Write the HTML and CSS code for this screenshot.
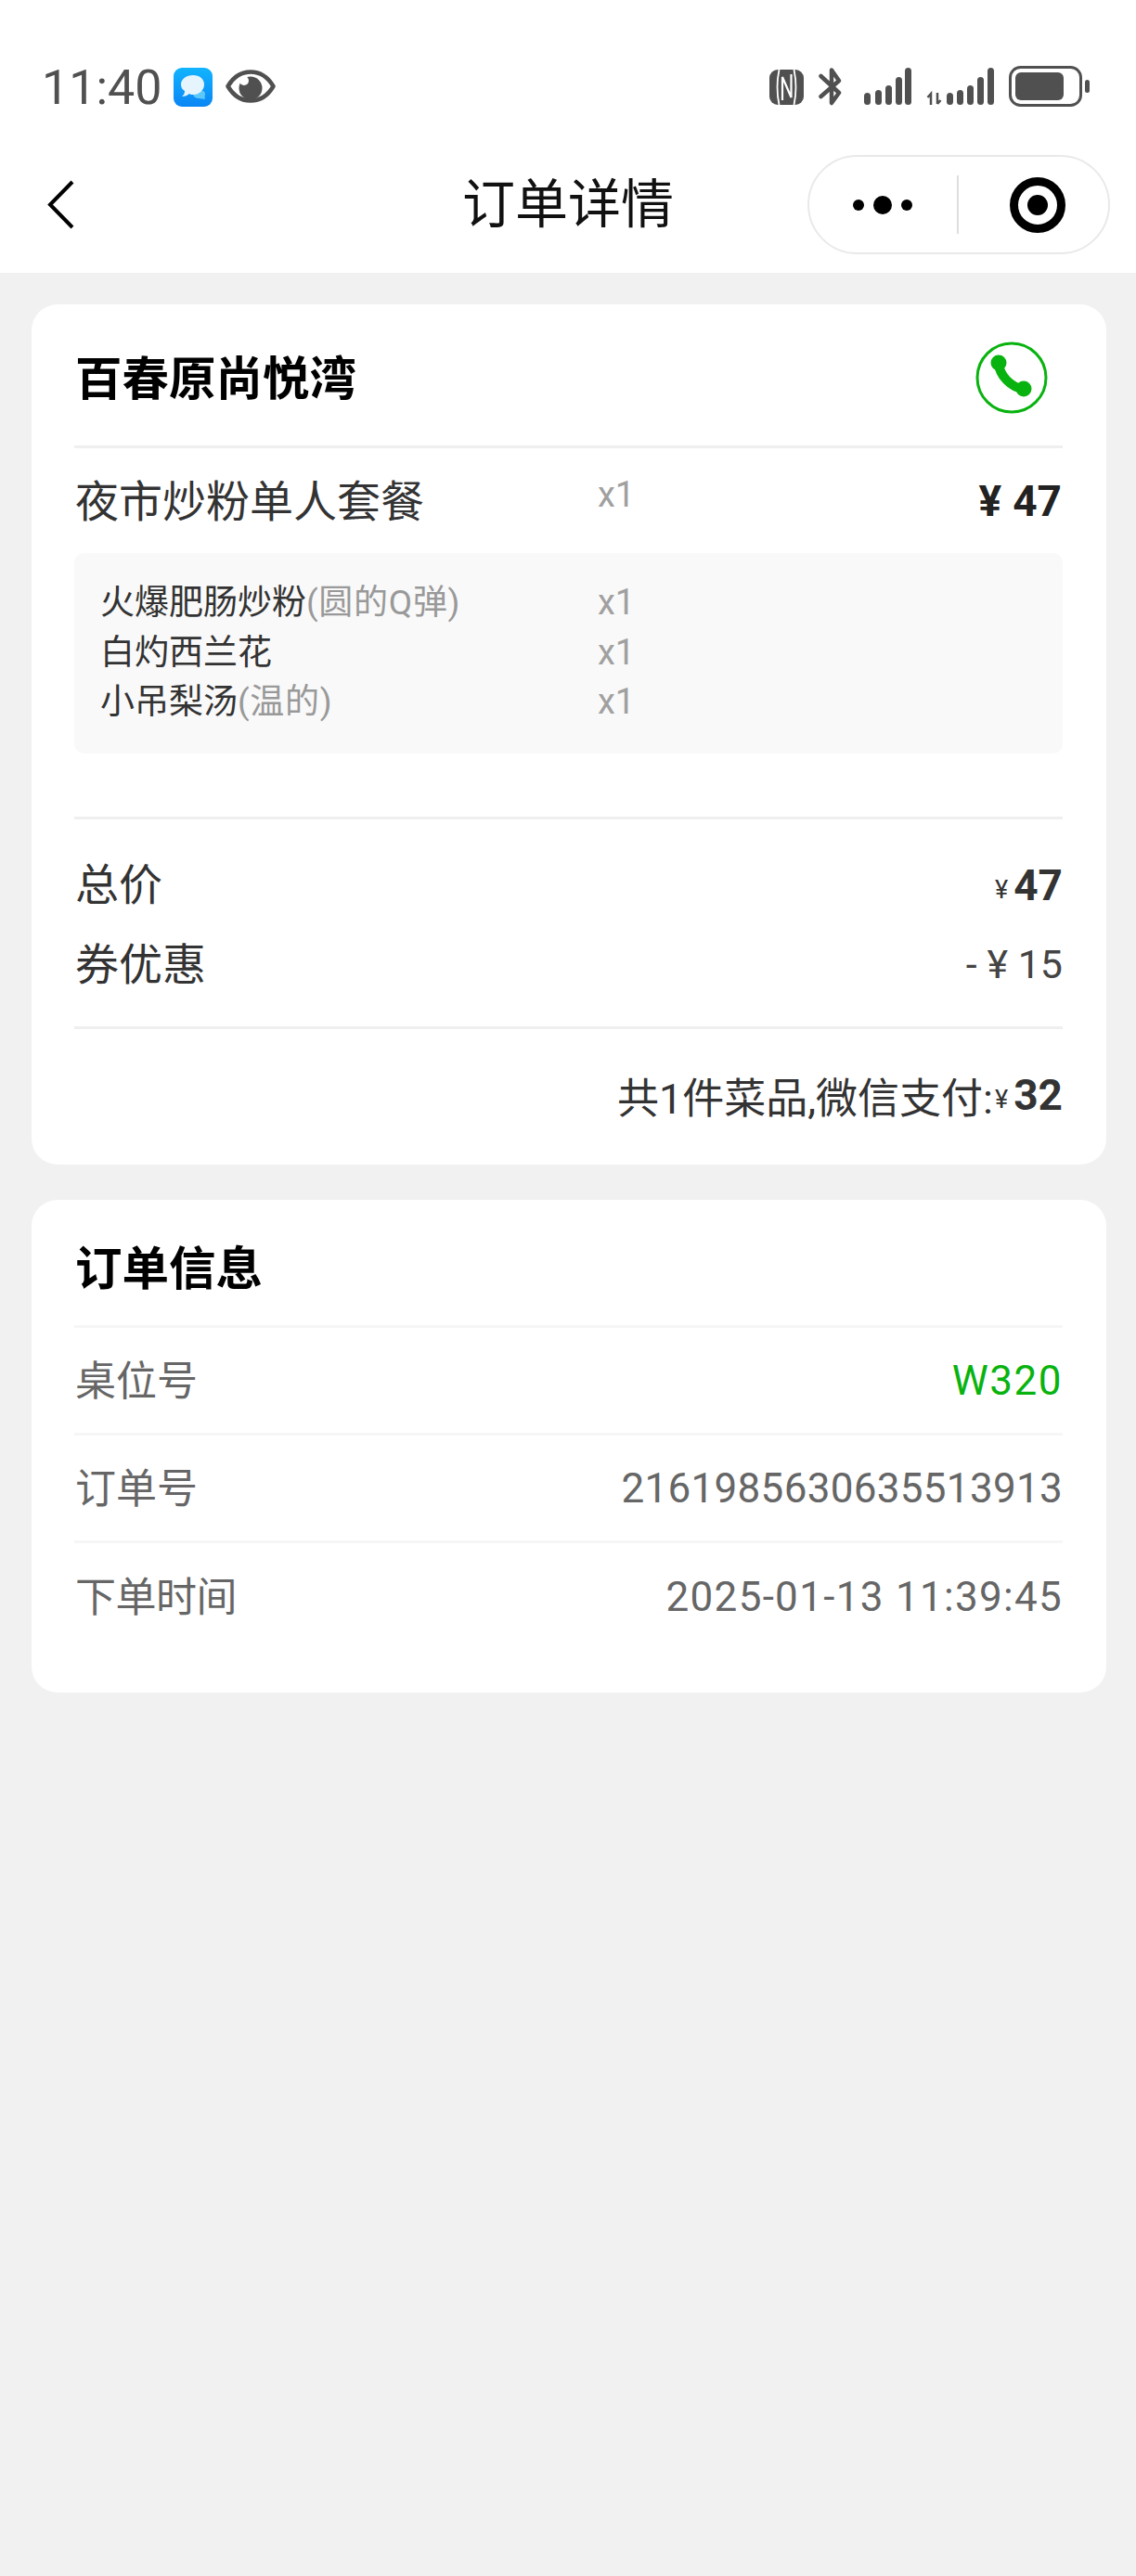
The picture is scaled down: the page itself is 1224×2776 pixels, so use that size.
FILE: index.html
```html
<!DOCTYPE html>
<html lang="zh-CN">
<head>
<meta charset="utf-8">
<title>订单详情</title>
<link rel="stylesheet" href="styles.css">
</head>
<body>
<header class="top">
  <div class="status">
    <div class="status-left">
      <span class="time">11:40</span>
      <svg class="app" viewBox="0 0 42 42"><defs><linearGradient id="ag" x1="0" y1="0" x2="0" y2="1"><stop offset="0" stop-color="#12b4ff"/><stop offset="1" stop-color="#0a86f4"/></linearGradient></defs><rect width="42" height="42" rx="9" fill="url(#ag)"/><path d="M27 25c4-1 7 0 7 3 0 2-1 4 0 6-2 0-4-1-6-1-4 0-7-2-7-5 0-2 3-3 6-3z" fill="#5fc8fb"/><path d="M21 8c7 0 12 4 12 10s-5 11-12 11c-1 0-3 0-4-1-2 2-5 3-8 3 2-2 3-3 3-6-3-2-4-4-4-7C8 12 14 8 21 8z" fill="#e6f5fd"/></svg>
      <svg class="eye" viewBox="0 0 54 36"><path d="M2.5 18C9 7 18 2.5 27 2.5S45 7 51.500 18C45 29 36 33.500 27 33.500S9 29 2.500 18z" fill="none" stroke="#505050" stroke-width="4.500" stroke-linejoin="round"/><circle cx="27" cy="20" r="12.500" fill="#505050"/><circle cx="20" cy="12" r="5" fill="#fff"/></svg>
    </div>
    <div class="status-right">
      <svg class="nfc" viewBox="0 0 37 38"><rect width="37" height="38" rx="9" fill="#505050"/><path d="M10.500 0C8 12 8 26 10.500 38M26.500 0C29 12 29 26 26.500 38" fill="none" stroke="#fff" stroke-width="1.800"/><path d="M14 33V8L23.500 30V5" fill="none" stroke="#fff" stroke-width="2.200"/></svg>
      <svg class="bt" viewBox="0 0 25 41"><path d="M2.500 9L22 27L14 38V2.500L22 14L2.500 31" fill="none" stroke="#505050" stroke-width="4.500" stroke-linejoin="round" stroke-linecap="round"/></svg>
      <svg class="sig1" viewBox="0 0 51 40"><g fill="#505050"><rect x="0" y="27" width="7" height="13" rx="3.500"/><rect x="12" y="24" width="7" height="16" rx="3.500"/><rect x="23" y="19" width="7" height="21" rx="3.500"/><rect x="34" y="10" width="7" height="30" rx="3.500"/><rect x="44" y="0" width="7" height="40" rx="3.500"/></g></svg>
      <svg class="sig2" viewBox="0 0 73 40"><path d="M5 40V29M1.500 32L5 28V40" fill="none" stroke="#505050" stroke-width="2.500"/><path d="M12 27V39M15.500 35L12 39" fill="none" stroke="#505050" stroke-width="2.500"/><g fill="#505050"><rect x="22" y="27" width="7" height="13" rx="3.500"/><rect x="33" y="24" width="7" height="16" rx="3.500"/><rect x="44" y="19" width="7" height="21" rx="3.500"/><rect x="55" y="10" width="7" height="30" rx="3.500"/><rect x="66" y="0" width="7" height="40" rx="3.500"/></g></svg>
      <svg class="batt" viewBox="0 0 87 44"><rect x="1.500" y="1.500" width="76" height="41" rx="11" fill="none" stroke="#505050" stroke-width="3"/><rect x="7" y="7" width="52" height="30" rx="6" fill="#505050"/><rect x="82" y="15" width="5" height="14" rx="2.500" fill="#505050"/></svg>
    </div>
  </div>
  <nav class="nav">
    <svg class="back" viewBox="0 0 29 53"><path d="M27 2L3 26.500L27 51" fill="none" stroke="#000" stroke-width="4"/></svg>
    <h1 class="nav-title">订单详情</h1>
    <div class="capsule">
      <svg class="dots" viewBox="0 0 64 22"><circle cx="6" cy="11" r="6"/><circle cx="32" cy="11" r="10"/><circle cx="58" cy="11" r="6"/></svg>
      <span class="cap-line"></span>
      <svg class="target" viewBox="0 0 60 60"><circle cx="30" cy="30" r="25.500" fill="none" stroke="#000" stroke-width="9"/><circle cx="30" cy="30" r="11"/></svg>
    </div>
  </nav>
</header>
<main class="page">
  <section class="card">
    <div class="shop">
      <h2 class="card-title">百春原尚悦湾</h2>
      <svg class="phone" viewBox="0 0 78 78"><circle cx="39" cy="39" r="37" fill="none" stroke="#09b30f" stroke-width="3"/><path d="M25 24C26 36 38 50 52 51" fill="none" stroke="#09b30f" stroke-width="10" stroke-linecap="round"/><circle cx="25" cy="23" r="8.500" fill="#09b30f"/><circle cx="52" cy="51" r="8.500" fill="#09b30f"/></svg>
    </div>
    <div class="dish">
      <span class="dish-name">夜市炒粉单人套餐</span>
      <span class="dish-qty">x1</span>
      <span class="dish-price"><span class="dish-yen">¥</span>47</span>
    </div>
    <div class="subs">
      <div class="sub"><span class="sub-name">火爆肥肠炒粉<span class="spec">(圆的Q弹)</span></span><span class="sub-qty">x1</span></div>
      <div class="sub"><span class="sub-name">白灼西兰花</span><span class="sub-qty">x1</span></div>
      <div class="sub"><span class="sub-name">小吊梨汤<span class="spec">(温的)</span></span><span class="sub-qty">x1</span></div>
    </div>
    <div class="sums">
      <div class="sum"><span class="label">总价</span><span class="sum-val"><span class="yen">¥</span><b class="num">47</b></span></div>
      <div class="sum"><span class="label">券优惠</span><span class="sum-off">- ¥ 15</span></div>
    </div>
    <div class="pay"><span class="pay-text">共1件菜品,微信支付:</span><span class="yen">¥</span><b class="num">32</b></div>
  </section>
  <section class="card card-info">
    <h2 class="card-title info-title">订单信息</h2>
    <div class="info"><span class="label">桌位号</span><span class="green">W320</span></div>
    <div class="info"><span class="label">订单号</span><span class="order-no">2161985630635513913</span></div>
    <div class="info"><span class="label">下单时间</span><span class="date">2025-01-13 11:39:45</span></div>
  </section>
</main>
</body>
</html>
```
FILE: styles.css
```css
* { box-sizing: border-box; }
html, body { margin: 0; padding: 0; }
body {
  width: 1224px;
  height: 2776px;
  background: #f1f1f1;
  font-family: Roboto, "Noto Sans CJK SC", sans-serif;
  overflow: hidden;
}
.top { background: #fff; height: 294px; padding-top: 71px; }
.status {
  height: 44px;
  display: flex;
  justify-content: space-between;
  align-items: center;
  padding: 0 50px 0 45px;
}
.status-left, .status-right { display: flex; align-items: center; }
.time { font-size: 52px; line-height: 44px; color: #505050; width: 142px; margin-top: 4px; }
.app { width: 42px; height: 42px; margin-top: 1px; }
.eye { width: 54px; height: 36px; margin-left: 14px; }
.nfc { width: 37px; height: 38px; margin-top: 1px; }
.bt { width: 25px; height: 41px; margin-left: 16px; }
.sig1 { width: 51px; height: 40px; margin-left: 24px; }
.sig2 { width: 73px; height: 40px; margin-left: 16px; }
.batt { width: 87px; height: 44px; margin-left: 16px; }
.nav {
  margin-top: 52px;
  height: 107px;
  display: grid;
  grid-template-columns: 1fr auto 1fr;
  align-items: center;
}
.back { width: 29px; height: 53px; margin-left: 51px; }
.nav-title { margin: 0; font-size: 57px; line-height: 107px; font-weight: 400; color: #111; }
.capsule {
  justify-self: end;
  margin-right: 28px;
  width: 326px;
  height: 107px;
  border: 2px solid #e9e9e9;
  border-radius: 54px;
  display: flex;
  align-items: center;
}
.dots { width: 64px; height: 22px; margin-left: 47px; }
.cap-line { width: 2px; height: 63px; background: #dedede; margin-left: 48px; }
.target { width: 60px; height: 60px; margin-left: 55px; }
.page { padding: 34px 32px 0 34px; }
.card { background: #fff; border-radius: 28px; padding: 0 47px 0 46px; }
.card-title { margin: 0; font-size: 50.500px; font-weight: 700; color: #000; }
.shop {
  height: 155px;
  padding: 0 16px 0 1px;
  border-bottom: 3px solid #efefef;
  display: flex;
  align-items: center;
  justify-content: space-between;
}
.phone { width: 78px; height: 78px; margin-top: 5px; }
.dish {
  height: 113px;
  display: grid;
  grid-template-columns: 566px 1fr auto;
  align-items: center;
  padding: 0 1px 0 1px;
}
.dish-name { font-size: 47px; color: #333; margin-bottom: 6px; }
.dish-qty { font-size: 38px; color: #a0a0a0; margin-bottom: 14px; margin-left: -3px; }
.dish-price { font-size: 46px; font-weight: 700; color: #222; }
.dish-yen { margin-right: 12px; }
.subs { background: #f9f9f9; border-radius: 10px; height: 216px; padding: 27px 0 0 28px; }
.sub { display: grid; grid-template-columns: 536px auto; height: 53.500px; line-height: 53.500px; }
.sub-name { font-size: 37px; color: #333; }
.spec { color: #999; letter-spacing: 0.700px; }
.sub-qty { font-size: 38px; color: #a0a0a0; }
.sums {
  margin-top: 68px;
  border-top: 3px solid #efefef;
  border-bottom: 3px solid #efefef;
  padding: 26px 0 25px 1px;
}
.sum {
  height: 86px;
  display: flex;
  justify-content: space-between;
  align-items: center;
  font-size: 47px;
  color: #333;
}
.label { margin-bottom: 6px; }
.sum-off { font-size: 43px; color: #444; margin: 2px 0 0 0; }
.yen { font-size: 27px; margin-top: 10px; margin-right: 6px; }
.sum-val { display: flex; align-items: center; margin-top: 4px; }
.num { font-size: 46px; font-weight: 700; color: #333; }
.pay {
  height: 146px;
  padding-bottom: 4px;
  display: flex;
  justify-content: flex-end;
  align-items: center;
  font-size: 45px;
  color: #333;
}
.pay-text { margin-right: 2px; }
.card-info { margin-top: 38px; height: 531px; }
.info-title { height: 138px; line-height: 150px; padding-left: 1px; border-bottom: 3px solid #f6f6f6; }
.info {
  height: 116px;
  display: flex;
  justify-content: space-between;
  align-items: center;
  padding: 0 0 0 1px;
  font-size: 44px;
  color: #666;
  border-bottom: 3px solid #f6f6f6;
}
.info:last-child { border-bottom: 0; }
.info:last-child .label { letter-spacing: -0.500px; }
.green { color: #09b30f; letter-spacing: 1.500px; }
.order-no { letter-spacing: 0.300px; }
.date { letter-spacing: 1.300px; }
```
